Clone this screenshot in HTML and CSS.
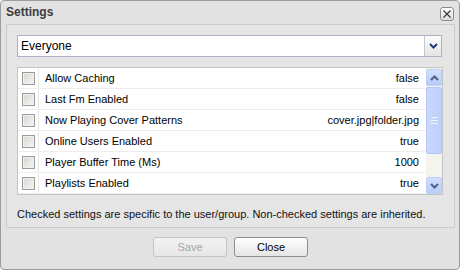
FILE: index.html
```html
<!DOCTYPE html>
<html lang="en">

<head>
  <meta charset="UTF-8" />
  <title>Settings</title>
  <link rel="stylesheet" href="styles.css">
</head>

<body>
  <div class="window">
    <div class="header">
      <span class="title">Settings</span>
      <span class="tool-close">
        <svg width="8" height="8" viewBox="0 0 8 8"><path d="M0.5 0.5 L7.5 7.5 M7.5 0.5 L0.5 7.5" stroke="#333" stroke-width="1.1" fill="none"/></svg>
      </span>
    </div>

    <div class="panel">
      <div class="combo">
        <div class="combo-text">Everyone</div>
        <div class="combo-trigger">
          <svg width="9" height="6" viewBox="0 0 9 6"><path d="M1 1 L4.5 4.5 L8 1" stroke="#1f3e7a" stroke-width="2" fill="none"/></svg>
        </div>
      </div>

      <div class="grid">
        <div class="rows">
          <div class="row"><div class="cell-check"><span class="checkbox"></span></div><div class="cell-name">Allow Caching</div><div class="cell-value">false</div></div>
          <div class="row"><div class="cell-check"><span class="checkbox"></span></div><div class="cell-name">Last Fm Enabled</div><div class="cell-value">false</div></div>
          <div class="row"><div class="cell-check"><span class="checkbox"></span></div><div class="cell-name">Now Playing Cover Patterns</div><div class="cell-value">cover.jpg|folder.jpg</div></div>
          <div class="row"><div class="cell-check"><span class="checkbox"></span></div><div class="cell-name">Online Users Enabled</div><div class="cell-value">true</div></div>
          <div class="row"><div class="cell-check"><span class="checkbox"></span></div><div class="cell-name">Player Buffer Time (Ms)</div><div class="cell-value">1000</div></div>
          <div class="row"><div class="cell-check"><span class="checkbox"></span></div><div class="cell-name">Playlists Enabled</div><div class="cell-value">true</div></div>
        </div>
        <div class="scrollbar">
          <div class="scroll-btn">
            <svg width="9" height="6" viewBox="0 0 9 6"><path d="M1 5 L4.5 1.5 L8 5" stroke="#4d6185" stroke-width="2" fill="none"/></svg>
          </div>
          <div class="scroll-track">
            <div class="scroll-thumb">
              <span class="grip"></span>
            </div>
          </div>
          <div class="scroll-btn">
            <svg width="9" height="6" viewBox="0 0 9 6"><path d="M1 1 L4.5 4.5 L8 1" stroke="#4d6185" stroke-width="2" fill="none"/></svg>
          </div>
        </div>
      </div>

      <div class="note">Checked settings are specific to the user/group. Non-checked settings are inherited.</div>
    </div>

    <div class="buttons">
      <button class="btn" disabled>Save</button>
      <button class="btn">Close</button>
    </div>
  </div>
</body>

</html>
```

FILE: styles.css
```css
body {
  margin: 0;
  font-family: 'Liberation Sans', Arial, sans-serif;
  font-size: 11px;
  background: #fff;
}

.window {
  width: 460px;
  height: 270px;
  box-sizing: border-box;
  border: 1px solid #9c9c9c;
  border-radius: 4px;
  background: #e2e2e2;
  padding: 0 4px 0 5px;
}

.header {
  height: 23px;
  display: flex;
  align-items: center;
  justify-content: space-between;
}

.title {
  font-weight: bold;
  font-size: 12px;
  color: #3c3c3c;
  margin-left: 0;
  margin-top: -1px;
}

.tool-close {
  width: 12px;
  height: 12px;
  border: 1px solid #8c8c8c;
  border-radius: 3px;
  background: linear-gradient(#ffffff, #dcdcdc);
  display: flex;
  align-items: center;
  justify-content: center;
  margin-right: 1px;
  margin-top: 2px;
}

.panel {
  border: 1px solid #cbcbcb;
  background: #e5e5e5;
  padding: 10px 11px 6px 10px;
}

.combo {
  height: 20px;
  border: 1px solid #aab2c4;
  background: #fff;
  display: flex;
  margin-right: 1px;
}

.combo-text {
  flex: 1;
  font-size: 12px;
  line-height: 20px;
  padding-left: 3px;
  color: #000;
}

.combo-trigger {
  width: 16px;
  border-left: 1px solid #c4c8d4;
  background: linear-gradient(#fdfdfd, #e4e4e4);
  display: flex;
  align-items: center;
  justify-content: center;
}

.grid {
  margin-top: 10px;
  height: 126px;
  border: 1px solid #c4c4c4;
  background: #fff;
  display: flex;
}

.rows {
  flex: 1;
  overflow: hidden;
}

.row {
  display: flex;
  height: 20px;
  border-bottom: 1px solid #ededed;
  align-items: center;
}

.cell-check {
  width: 20px;
  height: 20px;
  border-right: 1px solid #e6e6e6;
  display: flex;
  align-items: center;
  justify-content: center;
}

.checkbox {
  width: 11px;
  height: 11px;
  border: 1px solid #9a9a9a;
  background: linear-gradient(135deg, #d6d6d0, #f6f6f4);
  box-shadow: inset 0 0 0 1px #f0f0f0;
}

.cell-name {
  flex: 1;
  padding-left: 6px;
  color: #000;
}

.cell-value {
  padding-right: 7px;
  color: #000;
}

.scrollbar {
  width: 16px;
  display: flex;
  flex-direction: column;
  background: #f4f3ee;
  padding: 1px 0 0;
}

.scroll-btn {
  height: 15px;
  border: 1px solid #bccdf7;
  border-radius: 2px;
  background: linear-gradient(#d2defd, #b8cbf9);
  display: flex;
  align-items: center;
  justify-content: center;
}

.scroll-track {
  flex: 1;
  padding: 1px 0;
}

.scroll-thumb {
  height: 65px;
  border: 1px solid #b3c7f6;
  border-radius: 2px;
  background: linear-gradient(to right, #c9d8fc, #bccffa);
  display: flex;
  align-items: center;
  justify-content: center;
}

.grip {
  width: 7px;
  height: 5px;
  border-top: 1px solid #eef3ff;
  border-bottom: 1px solid #eef3ff;
  background: linear-gradient(transparent 2px, #eef3ff 2px, #eef3ff 3px, transparent 3px);
}

.note {
  margin-top: 12px;
  line-height: 14px;
  color: #111;
}

.buttons {
  display: flex;
  justify-content: center;
  gap: 7px;
  margin-top: 9px;
}

.btn {
  width: 74px;
  height: 20px;
  font-family: 'Liberation Sans', Arial, sans-serif;
  font-size: 11px;
  color: #000;
  border: 1px solid #8e8e8e;
  border-radius: 3px;
  background: linear-gradient(#ffffff, #e4e4e4);
  padding: 0;
}

.btn:disabled {
  color: #a6a6a6;
  border-color: #c4c4c4;
  background: linear-gradient(#f2f2f2, #e6e6e6);
}
```
